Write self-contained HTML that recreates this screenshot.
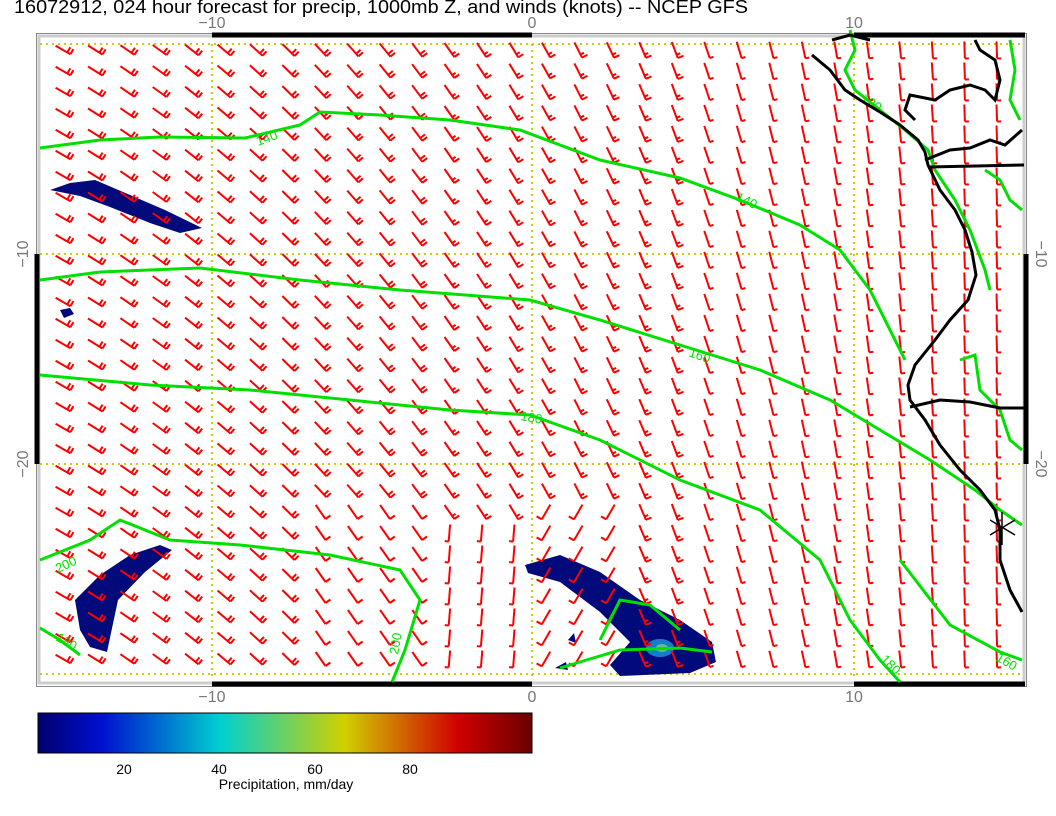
<!DOCTYPE html>
<html><head><meta charset="utf-8">
<style>
html,body{margin:0;padding:0;background:#fff;width:1056px;height:816px;overflow:hidden;font-family:"Liberation Sans",sans-serif}
svg{position:absolute;left:0;top:0}
</style></head><body>
<svg id="s" width="1056" height="816" xmlns="http://www.w3.org/2000/svg">
<text x="14" y="13" font-size="18" fill="#000" font-family="Liberation Sans" textLength="734" lengthAdjust="spacingAndGlyphs">16072912, 024 hour forecast for precip, 1000mb Z, and winds (knots) -- NCEP GFS</text>
<rect x="36.5" y="33.5" width="990" height="653" fill="#fff" stroke="#888" stroke-width="1"/>
<rect x="39" y="36" width="985" height="647" fill="none" stroke="#ccc" stroke-width="3"/>
<g stroke="#000" stroke-width="5">
<line x1="212" y1="35" x2="532" y2="35"/><line x1="854" y1="35" x2="1025" y2="35"/>
<line x1="212" y1="684" x2="532" y2="684"/><line x1="854" y1="684" x2="1025" y2="684"/>
<line x1="37" y1="254" x2="37" y2="464"/><line x1="1026" y1="254" x2="1026" y2="464"/>
</g>
<g stroke="#cccc00" stroke-width="2" stroke-dasharray="2,4">
<line x1="40" y1="44" x2="1022" y2="44"/><line x1="40" y1="254" x2="1022" y2="254"/>
<line x1="40" y1="464" x2="1022" y2="464"/><line x1="40" y1="674" x2="1022" y2="674"/>
<line x1="212" y1="44" x2="212" y2="680"/><line x1="532" y1="44" x2="532" y2="680"/><line x1="854" y1="44" x2="854" y2="680"/>
</g>
<g font-size="16" fill="#777" font-family="Liberation Sans" text-anchor="middle">
<text x="212" y="28">−10</text><text x="532" y="28">0</text><text x="854" y="28">10</text>
<text x="212" y="702">−10</text><text x="532" y="702">0</text><text x="854" y="702">10</text>
<text transform="translate(28,254) rotate(-90)">−10</text><text transform="translate(28,464) rotate(-90)">−20</text>
<text transform="translate(1036,254) rotate(90)">−10</text><text transform="translate(1036,464) rotate(90)">−20</text>
</g>
<g id="blobs" fill="#000a7a">
<polygon points="50,190 70,183 95,180 130,195 165,210 202,228 180,233 150,223 110,207 80,196"/>
<polygon points="75,600 100,575 130,555 160,545 172,550 145,572 118,600 107,652 90,647 80,630"/>
<polygon points="525,565 560,555 600,572 640,600 680,620 712,642 716,662 690,673 620,676 610,665 630,642 600,612 560,582 528,573"/>
<polygon points="60,310 70,308 74,314 64,318"/>
<polygon points="555,668 566,662 568,670"/>
<polygon points="568,640 574,633 576,643"/>
</g>
<ellipse cx="660" cy="648" rx="14" ry="9" fill="#1a7acc"/>
<ellipse cx="662" cy="648" rx="6" ry="4" fill="#5cc08a"/>
<g id="barbs" stroke="#f00" stroke-width="2" fill="none"></g>
<g stroke="#00e000" stroke-width="3" fill="none">
<polyline points="40,148 100,140 160,137 245,138 300,125 320,112 380,115 450,120 520,130 600,160 680,178 740,200 800,225 840,250 870,290 890,330 905,360"/>
<polyline points="40,280 100,272 200,268 300,280 400,290 530,300 600,320 680,345 760,370 830,400 880,430 930,460 975,490 1000,510 1022,525"/>
<polyline points="40,375 150,385 250,390 350,400 450,410 530,415 600,440 680,480 760,510 820,560 850,620 880,660 900,682"/>
<polyline points="40,560 90,540 120,520 170,540 240,545 330,555 400,570 420,600 405,650 392,682"/>
<polyline points="40,628 60,640 80,655"/>
<polyline points="560,668 620,650 680,648 712,652"/>
<polyline points="600,640 620,600 650,605 680,630"/>
<polyline points="900,560 950,625 1000,652 1022,660"/>
<polyline points="850,30 855,50 845,70 855,90 880,110 905,130 928,150 935,170 955,200 970,230 985,270 990,290"/>
<polyline points="1010,40 1015,70 1010,100 1020,120"/>
<polyline points="985,170 1000,180 1010,200 1022,210"/>
<polyline points="960,360 975,355 980,390 1000,410 1010,440 1022,450"/>
</g>
<g fill="#00e000" font-size="13" font-family="Liberation Sans">
<text x="258" y="146" transform="rotate(-20 258 146)">140</text>
<text x="735" y="200" transform="rotate(25 735 200)">140</text>
<text x="688" y="356" transform="rotate(20 688 356)">160</text>
<text x="520" y="420" transform="rotate(10 520 420)">180</text>
<text x="58" y="573" transform="rotate(-25 58 573)">200</text>
<text x="55" y="640" transform="rotate(30 55 640)">180</text>
<text x="398" y="655" transform="rotate(-80 398 655)">200</text>
<text x="880" y="660" transform="rotate(45 880 660)">180</text>
<text x="995" y="660" transform="rotate(30 995 660)">160</text>
<text x="860" y="100" transform="rotate(35 860 100)">120</text>
</g>
<g stroke="#000" stroke-width="3" fill="none">
<polyline points="812,55 830,70 845,90 860,100 880,112 900,125 918,140 925,152 928,165 940,190 955,210 965,230 972,252 976,275 968,300 950,320 935,340 915,365 908,385 910,400 925,420 940,445 960,470 980,490 995,510 1000,530 1000,560 1010,590 1022,612"/>
<polyline points="832,40 850,35 870,40"/>
<polyline points="975,40 980,50 995,60 1000,80 995,100 985,90 970,85 950,90 935,100 910,95 905,110 915,120"/>
<polyline points="925,160 950,150 970,148 990,140 1005,145 1022,130"/>
<polyline points="928,167 1024,165"/>
<polyline points="910,407 940,400 970,402 1000,408 1024,408"/>
</g>
<g stroke="#000" stroke-width="1.5"><line x1="990" y1="520" x2="1015" y2="535"/><line x1="990" y1="535" x2="1015" y2="520"/><line x1="1002" y1="512" x2="1002" y2="545"/></g>
<defs><linearGradient id="cb" x1="0" x2="1">
<stop offset="0" stop-color="#00006e"/><stop offset="0.13" stop-color="#0010d0"/><stop offset="0.37" stop-color="#00d0d0"/><stop offset="0.62" stop-color="#d0d000"/><stop offset="0.85" stop-color="#d00000"/><stop offset="1" stop-color="#6a0000"/>
</linearGradient></defs>
<rect x="38" y="713" width="494" height="40" fill="url(#cb)" stroke="#000"/>
<g font-size="14" fill="#000" text-anchor="middle" font-family="Liberation Sans">
<text x="124" y="774">20</text><text x="219" y="774">40</text><text x="315" y="774">60</text><text x="410" y="774">80</text>
<text x="286" y="789">Precipitation, mm/day</text>
</g>
</svg>
<script>
var g=document.getElementById('barbs'),h='';
for(var y=50;y<680;y+=21){for(var x=63;x<1020;x+=32.2){
 var t=(x-63)/900; if(t>1)t=1;
 var ang=(30+58*t), side=1;
 var nf=t<0.4?2:(t<0.7?1.5:0.5);
 if(y>500&&x>300&&x<420){ang=55;nf=1;}
 if(y>530&&x>=420&&x<540){ang=95;side=-1;nf=0.8;}
 if(y>500&&x>=540&&x<640){ang=120;side=-1;nf=1;}
 var a=ang*Math.PI/180, L=17;
 var dx=Math.cos(a),dy=Math.sin(a);
 var x0=x-dx*L*0.5,y0=y-dy*L*0.5,x1=x+dx*L*0.5,y1=y+dy*L*0.5;
 var px=dy*side,py=-dx*side;
 h+='<line x1="'+x0.toFixed(1)+'" y1="'+y0.toFixed(1)+'" x2="'+x1.toFixed(1)+'" y2="'+y1.toFixed(1)+'"/>';
 var k=0,rem=nf;
 while(rem>0){var fl=rem>=1?6:4;var bx=x1-dx*k*3.5,by=y1-dy*k*3.5;
  h+='<line x1="'+bx.toFixed(1)+'" y1="'+by.toFixed(1)+'" x2="'+(bx+px*fl).toFixed(1)+'" y2="'+(by+py*fl).toFixed(1)+'"/>';
  rem-=1;k++;}
}}
g.innerHTML=h;
</script>
</body></html>
